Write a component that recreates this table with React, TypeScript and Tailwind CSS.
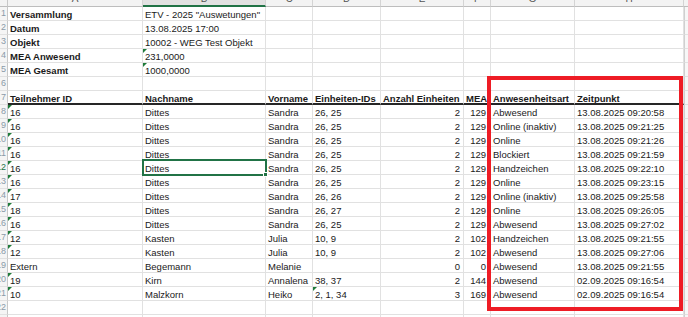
import clsx from "clsx";

type CellData = {
  text?: string;
  right?: boolean;
  tri?: boolean;
  bold?: boolean;
};

const widths = [
  "w-[135px]",
  "w-[123px]",
  "w-[47px]",
  "w-[68px]",
  "w-[83px]",
  "w-[27px]",
  "w-[84px]",
  "w-[109px]",
];

const letters = ["A", "B", "C", "D", "E", "F", "G", "H"];

const topRows: CellData[][] = [
  [{ text: "Versammlung", bold: true }, { text: 'ETV - 2025 "Auswetungen"' }],
  [{ text: "Datum", bold: true }, { text: "13.08.2025 17:00" }],
  [{ text: "Objekt", bold: true }, { text: "10002 - WEG Test Objekt" }],
  [{ text: "MEA Anwesend", bold: true }, { text: "231,0000", tri: true }],
  [{ text: "MEA Gesamt", bold: true }, { text: "1000,0000", tri: true }],
  [],
];

const header = [
  "Teilnehmer ID",
  "Nachname",
  "Vorname",
  "Einheiten-IDs",
  "Anzahl Einheiten",
  "MEA",
  "Anwesenheitsart",
  "Zeitpunkt",
];

const people = [
  ["16", "Dittes", "Sandra", "26, 25", "2", "129", "Abwesend", "13.08.2025 09:20:58"],
  ["16", "Dittes", "Sandra", "26, 25", "2", "129", "Online (inaktiv)", "13.08.2025 09:21:25"],
  ["16", "Dittes", "Sandra", "26, 25", "2", "129", "Online", "13.08.2025 09:21:26"],
  ["16", "Dittes", "Sandra", "26, 25", "2", "129", "Blockiert", "13.08.2025 09:21:59"],
  ["16", "Dittes", "Sandra", "26, 25", "2", "129", "Handzeichen", "13.08.2025 09:22:10"],
  ["16", "Dittes", "Sandra", "26, 25", "2", "129", "Online", "13.08.2025 09:23:15"],
  ["17", "Dittes", "Sandra", "26, 26", "2", "129", "Online (inaktiv)", "13.08.2025 09:25:58"],
  ["18", "Dittes", "Sandra", "26, 27", "2", "129", "Online", "13.08.2025 09:26:05"],
  ["16", "Dittes", "Sandra", "26, 25", "2", "129", "Abwesend", "13.08.2025 09:27:02"],
  ["12", "Kasten", "Julia", "10, 9", "2", "102", "Handzeichen", "13.08.2025 09:21:55"],
  ["12", "Kasten", "Julia", "10, 9", "2", "102", "Abwesend", "13.08.2025 09:27:06"],
  ["Extern", "Begemann", "Melanie", "", "0", "0", "Abwesend", "13.08.2025 09:21:55"],
  ["19", "Kirn", "Annalena", "38, 37", "2", "144", "Abwesend", "02.09.2025 09:16:54"],
  ["10", "Malzkorn", "Heiko", "2, 1, 34", "3", "169", "Abwesend", "02.09.2025 09:16:54"],
];

function toCells(r: string[]): CellData[] {
  return r.map((text, i) => ({
    text,
    right: i === 4 || i === 5,
    tri: (i === 0 && text !== "Extern") || (i === 3 && text === "2, 1, 34"),
  }));
}

function Row({
  n,
  cells,
  bold,
  thick,
  active,
}: {
  n: number;
  cells: CellData[];
  bold?: boolean;
  thick?: boolean;
  active?: boolean;
}) {
  return (
    <div className="flex h-[14px]">
      <div
        className={clsx(
          "flex h-full w-[8px] shrink-0 justify-end overflow-hidden border-r border-b border-r-[#c8c8c8] border-b-[#e1e1e1] bg-[#f5f5f5] text-[9px] leading-[13px]",
          active ? "text-[#217346]" : "text-[#8a9aa8]"
        )}
      >
        <span className="shrink-0 pr-[1px]">{n}</span>
      </div>
      {widths.map((w, i) => {
        const c = cells[i] ?? {};
        return (
          <div
            key={i}
            className={clsx(
              "relative h-full shrink-0 overflow-hidden whitespace-nowrap border-r border-r-[#e1e1e1] pt-[1px] leading-[13px]",
              w,
              thick ? "border-b-2 border-b-[#262626]" : "border-b border-b-[#e1e1e1]",
              c.right ? (i === 5 ? "pr-[4px] text-right" : "pr-[3px] text-right") : "pl-[2px]",
              (bold || c.bold) && "font-bold"
            )}
          >
            {c.tri && (
              <span className="absolute top-0 left-0 h-0 w-0 border-t-[4px] border-r-[4px] border-t-[#1e7b3a] border-r-transparent" />
            )}
            {c.text}
          </div>
        );
      })}
      <div className="h-full flex-1 border-b border-l border-b-[#e1e1e1] border-l-[#d0d0d0] bg-[#f7f7f7]" />
    </div>
  );
}

export default function App() {
  let n = 0;
  return (
    <div className="relative h-[317px] w-[688px] overflow-hidden bg-white font-['Liberation_Sans',Arial,sans-serif] text-[9.5px] text-[#1a1a1a]">
      <div className="flex h-[7px] bg-[#f3f3f3]">
        <div className="w-[8px] shrink-0 border-r border-b border-r-[#c8c8c8] border-b-[#bdbdbd]" />
        {widths.map((w, i) => (
          <div
            key={i}
            className={clsx(
              "h-full shrink-0 overflow-hidden border-r border-r-[#d4d4d4]",
              w,
              i === 1 ? "border-b-2 border-b-[#217346] bg-[#e2e2e2]" : "border-b border-b-[#bdbdbd]"
            )}
          >
            <div className="-mt-[8px] h-[14px] text-center text-[10px] leading-[14px] text-[#555]">{letters[i]}</div>
          </div>
        ))}
        <div className="flex-1 border-b border-b-[#bdbdbd]" />
      </div>

      {topRows.map((cells, i) => (
        <Row key={`t${i}`} n={++n} cells={cells} />
      ))}
      <Row n={++n} cells={header.map((text) => ({ text }))} bold thick />
      {people.map((r, i) => {
        const num = ++n;
        return <Row key={`p${i}`} n={num} cells={toCells(r)} active={num === 12} />;
      })}
      <Row n={++n} cells={[]} />
      <Row n={++n} cells={[]} />

      {/* selected cell B12 */}
      <div className="absolute top-[159px] left-[142px] h-[17px] w-[125px] border-2 border-[#217346]" />
      <div className="absolute top-[172px] left-[263px] h-[5px] w-[5px] border border-white bg-[#217346]" />

      {/* red highlight frame */}
      <div className="absolute top-[76px] left-[487px] h-[235px] w-[196px] border-[4px] border-[#ee1c25]" />
    </div>
  );
}
